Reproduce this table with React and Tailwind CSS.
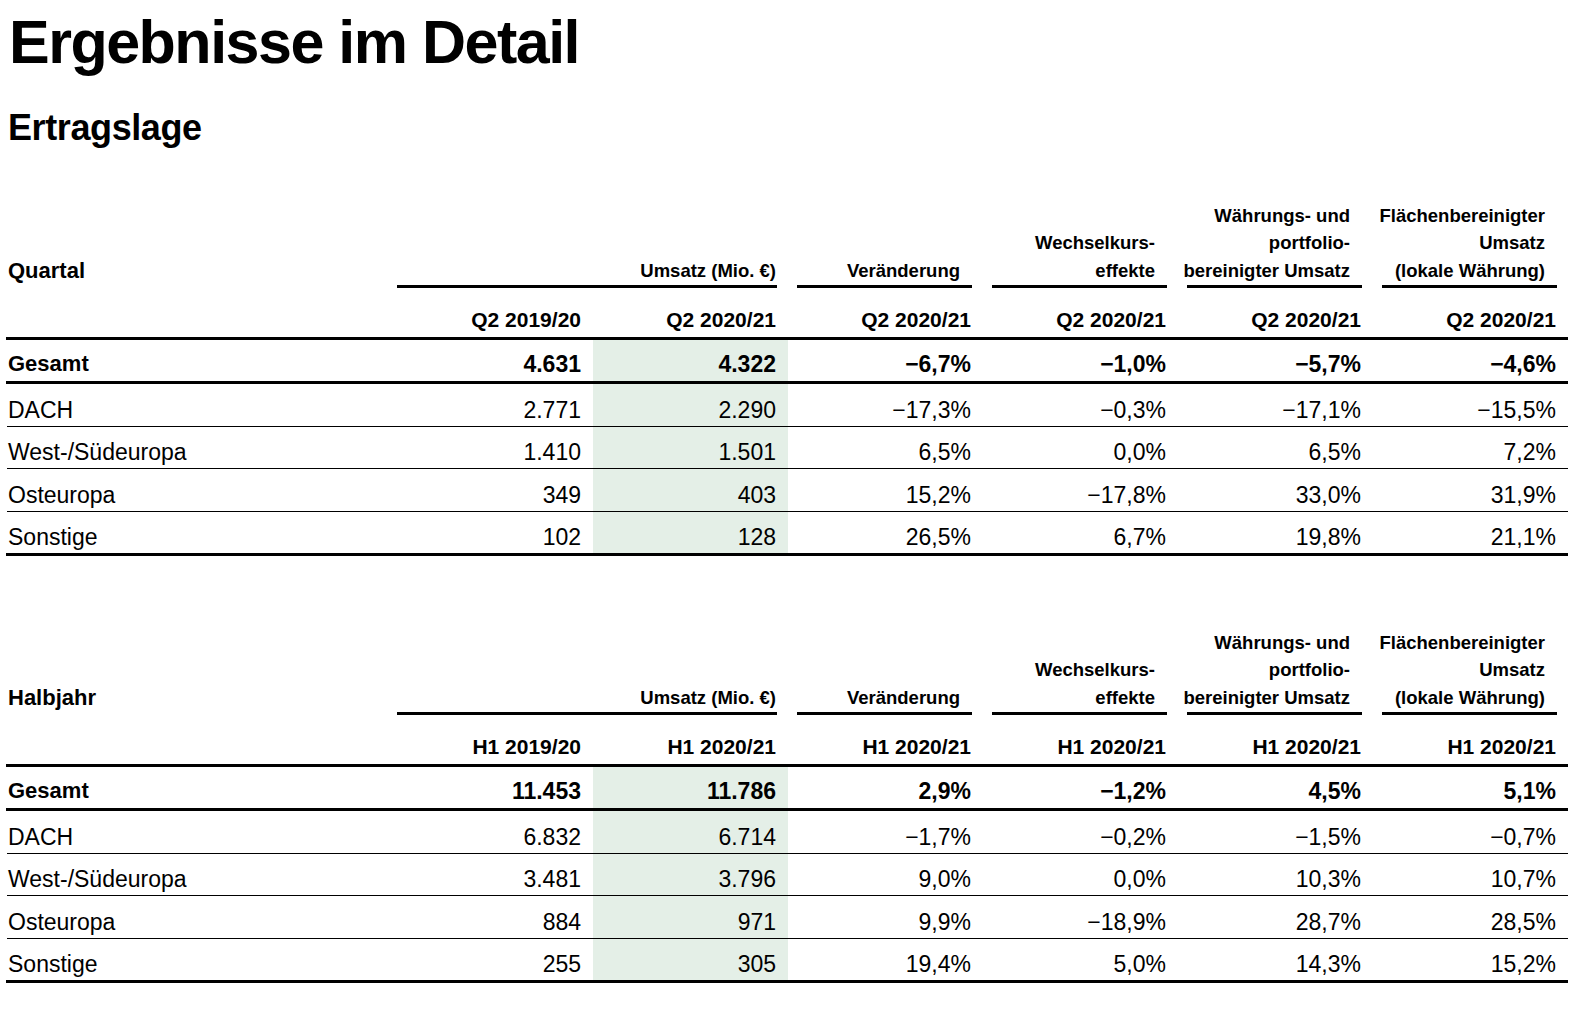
import React from "react";

const font = { fontFamily: "'Liberation Sans', Arial, sans-serif" };

const tables = [
  {
    label: "Quartal",
    cols: ["Q2 2019/20", "Q2 2020/21", "Q2 2020/21", "Q2 2020/21", "Q2 2020/21", "Q2 2020/21"],
    total: ["Gesamt", "4.631", "4.322", "−6,7%", "−1,0%", "−5,7%", "−4,6%"],
    rows: [
      ["DACH", "2.771", "2.290", "−17,3%", "−0,3%", "−17,1%", "−15,5%"],
      ["West-/Südeuropa", "1.410", "1.501", "6,5%", "0,0%", "6,5%", "7,2%"],
      ["Osteuropa", "349", "403", "15,2%", "−17,8%", "33,0%", "31,9%"],
      ["Sonstige", "102", "128", "26,5%", "6,7%", "19,8%", "21,1%"],
    ],
  },
  {
    label: "Halbjahr",
    cols: ["H1 2019/20", "H1 2020/21", "H1 2020/21", "H1 2020/21", "H1 2020/21", "H1 2020/21"],
    total: ["Gesamt", "11.453", "11.786", "2,9%", "−1,2%", "4,5%", "5,1%"],
    rows: [
      ["DACH", "6.832", "6.714", "−1,7%", "−0,2%", "−1,5%", "−0,7%"],
      ["West-/Südeuropa", "3.481", "3.796", "9,0%", "0,0%", "10,3%", "10,7%"],
      ["Osteuropa", "884", "971", "9,9%", "−18,9%", "28,7%", "28,5%"],
      ["Sonstige", "255", "305", "19,4%", "5,0%", "14,3%", "15,2%"],
    ],
  },
];

const rowHeights = ["h-[42px]", "h-[41px]", "h-[42px]", "h-[41px]"];

const GRID = "grid grid-cols-[392px_repeat(6,195px)]";

function HeaderGroup({ lines, span2 }) {
  return (
    <div className={span2 ? "col-span-2 flex flex-col" : "flex flex-col"}>
      <div
        className={
          "h-[84px] flex items-end justify-end pb-[1px] text-right font-bold text-[18.5px] leading-[27.5px] whitespace-nowrap " +
          (span2 ? "pr-[12px]" : "pr-[23px]")
        }
      >
        <div>
          {lines.map((l, i) => (
            <div key={i}>{l}</div>
          ))}
        </div>
      </div>
      <div className={"h-[3px] bg-black " + (span2 ? "ml-[-1px] mr-[11px]" : "ml-[9px] mr-[11px]")} />
    </div>
  );
}

function Table({ t, className }) {
  return (
    <div className={"w-[1562px] text-black " + className}>
      <div className={GRID}>
        <div className="flex flex-col">
          <div className="h-[84px] flex items-end pb-[1px] pl-[2px] font-bold text-[22px] leading-[27.5px]">
            {t.label}
          </div>
          <div className="h-[3px]" />
        </div>
        <HeaderGroup span2 lines={["Umsatz (Mio. €)"]} />
        <HeaderGroup lines={["Veränderung"]} />
        <HeaderGroup lines={["Wechselkurs-", "effekte"]} />
        <HeaderGroup lines={["Währungs- und", "portfolio-", "bereinigter Umsatz"]} />
        <HeaderGroup lines={["Flächenbereinigter", "Umsatz", "(lokale Währung)"]} />
      </div>
      <div className={GRID + " h-[49px]"}>
        <div />
        {t.cols.map((c, i) => (
          <div
            key={i}
            className="flex items-end justify-end pr-[12px] pb-[3px] font-bold text-[21px] leading-[28px] whitespace-nowrap"
          >
            {c}
          </div>
        ))}
      </div>
      <div className="h-[3px] bg-black" />
      <div className={GRID + " h-[41px]"}>
        <div className="flex items-center pt-[7px] pl-[2px] font-bold text-[22px] leading-[28px]">{t.total[0]}</div>
        {t.total.slice(1).map((v, i) => (
          <div
            key={i}
            className={
              "flex items-center justify-end pr-[12px] pt-[7px] font-bold text-[23px] leading-[28px] " +
              (i === 1 ? "bg-[#e4efe7]" : "")
            }
          >
            {v}
          </div>
        ))}
      </div>
      <div className="h-[3px] bg-black" />
      {t.rows.map((r, ri) => (
        <React.Fragment key={ri}>
          {ri > 0 && <div className="h-px bg-black ml-[1px]" />}
          <div className={GRID + " " + rowHeights[ri]}>
            <div className="flex items-center pt-[9px] pl-[2px] text-[23px] leading-[28px] whitespace-nowrap">{r[0]}</div>
            {r.slice(1).map((v, i) => (
              <div
                key={i}
                className={
                  "flex items-center justify-end pr-[12px] pt-[9px] text-[23px] leading-[28px] " +
                  (i === 1 ? "bg-[#e4efe7]" : "")
                }
              >
                {v}
              </div>
            ))}
          </div>
        </React.Fragment>
      ))}
      <div className="h-[3px] bg-black" />
    </div>
  );
}

export default function App() {
  return (
    <div className="min-h-screen w-full bg-white px-[6px]" style={font}>
      <h1 className="h-[84px] pl-[3px] leading-[84px] text-[61px] font-bold tracking-[-1.5px] text-black whitespace-nowrap">
        Ergebnisse im Detail
      </h1>
      <h2 className="mt-[22px] h-[44px] pl-[2px] leading-[44px] text-[36px] font-bold tracking-[-0.4px] text-black">
        Ertragslage
      </h2>
      <Table t={tables[0]} className="mt-[51px]" />
      <Table t={tables[1]} className="mt-[72px]" />
    </div>
  );
}
